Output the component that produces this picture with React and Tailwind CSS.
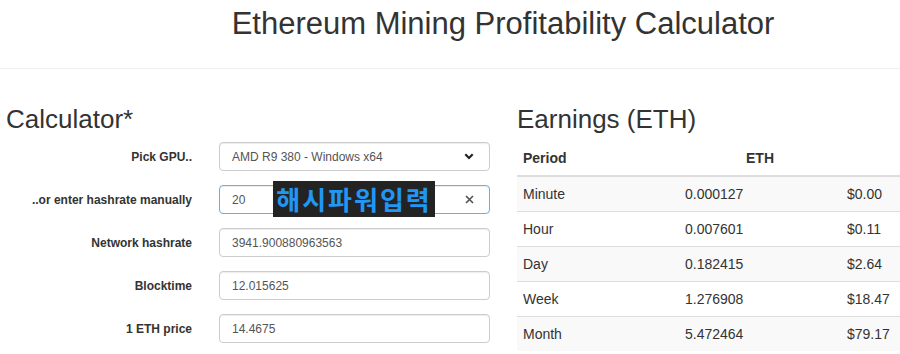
const ROWS = [
  { period: 'Minute', eth: '0.000127', usd: '$0.00' },
  { period: 'Hour', eth: '0.007601', usd: '$0.11' },
  { period: 'Day', eth: '0.182415', usd: '$2.64' },
  { period: 'Week', eth: '1.276908', usd: '$18.47' },
  { period: 'Month', eth: '5.472464', usd: '$79.17' },
]

const FIELDS = [
  { label: 'Network hashrate', value: '3941.900880963563' },
  { label: 'Blocktime', value: '12.015625' },
  { label: '1 ETH price', value: '14.4675' },
]

const inputBase =
  'w-[271px] h-[29px] rounded-[4px] border bg-white px-[12px] flex items-center text-[12px] text-[#555] shadow-[inset_0_1px_1px_rgba(0,0,0,0.075)]'

function Label({ children }) {
  return (
    <div className="w-[192px] text-right text-[12px] font-bold text-[#333] mr-[27px]">
      {children}
    </div>
  )
}

export default function App() {
  return (
    <div className="w-[900px] h-[354px] overflow-hidden bg-white text-[#333] font-['Liberation_Sans',Arial,sans-serif]">
      {/* Header */}
      <div className="h-[69px] border-b border-[#eee] pt-[7px] pl-[106px] text-center">
        <h1 className="text-[31px] leading-[34px] text-[#333]">
          Ethereum Mining Profitability Calculator
        </h1>
      </div>

      <div className="flex">
        {/* Calculator form */}
        <div className="w-[517px] shrink-0 pl-[6px]">
          <h2 className="mt-[35px] text-[26px] leading-[30px]">Calculator*</h2>
          <div className="mt-[8px] -ml-[6px] flex flex-col gap-[14px]">
            <div className="flex items-center">
              <Label>Pick GPU..</Label>
              <div className={`${inputBase} border-[#ccc] justify-between pr-[15px]`}>
                <span>AMD R9 380 - Windows x64</span>
                <svg width="10" height="7" viewBox="0 0 10 7">
                  <polyline points="1.3,1.3 5,5 8.7,1.3" fill="none" stroke="#222" strokeWidth="2.2" />
                </svg>
              </div>
            </div>

            <div className="flex items-center">
              <Label>..or enter hashrate manually</Label>
              <div className="relative">
                <div className={`${inputBase} border-[#66afe9] justify-between pr-[15px] shadow-[inset_0_1px_1px_rgba(0,0,0,0.075),0_0_6px_rgba(102,175,233,0.6)]`}>
                  <span>20</span>
                  <svg width="9" height="9" viewBox="0 0 9 9">
                    <path d="M1 1 L8 8 M8 1 L1 8" stroke="#555" strokeWidth="1.7" />
                  </svg>
                </div>
                <div className="absolute left-[54px] top-[-4px] w-[162px] h-[36px] bg-[#232323] flex items-center justify-center text-[26px] tracking-[2px] leading-none font-bold text-[#2196f3] font-['Noto_Sans_CJK_KR',sans-serif]">
                  해시파워입력
                </div>
              </div>
            </div>

            {FIELDS.map((f) => (
              <div key={f.label} className="flex items-center">
                <Label>{f.label}</Label>
                <div className={`${inputBase} border-[#ccc]`}>{f.value}</div>
              </div>
            ))}
          </div>
        </div>

        {/* Earnings */}
        <div className="shrink-0 w-[486px]">
          <h2 className="mt-[35px] text-[26px] leading-[30px]">Earnings (ETH)</h2>
          <div className="mt-[8px] text-[14px]">
            <div className="grid grid-cols-3 h-[35px] items-center font-bold border-b-2 border-[#ddd]">
              <div className="pl-[6px]">Period</div>
              <div className="text-center">ETH</div>
              <div />
            </div>
            {ROWS.map((r, i) => (
              <div
                key={r.period}
                className={`grid grid-cols-3 items-center ${i > 0 ? 'border-t border-[#ddd] h-[35px]' : 'h-[34px]'} ${i % 2 === 0 ? 'bg-[#f9f9f9]' : 'bg-white'}`}
              >
                <div className="pl-[6px]">{r.period}</div>
                <div className="pl-[6px]">{r.eth}</div>
                <div className="pl-[6px]">{r.usd}</div>
              </div>
            ))}
          </div>
        </div>
      </div>
    </div>
  )
}
